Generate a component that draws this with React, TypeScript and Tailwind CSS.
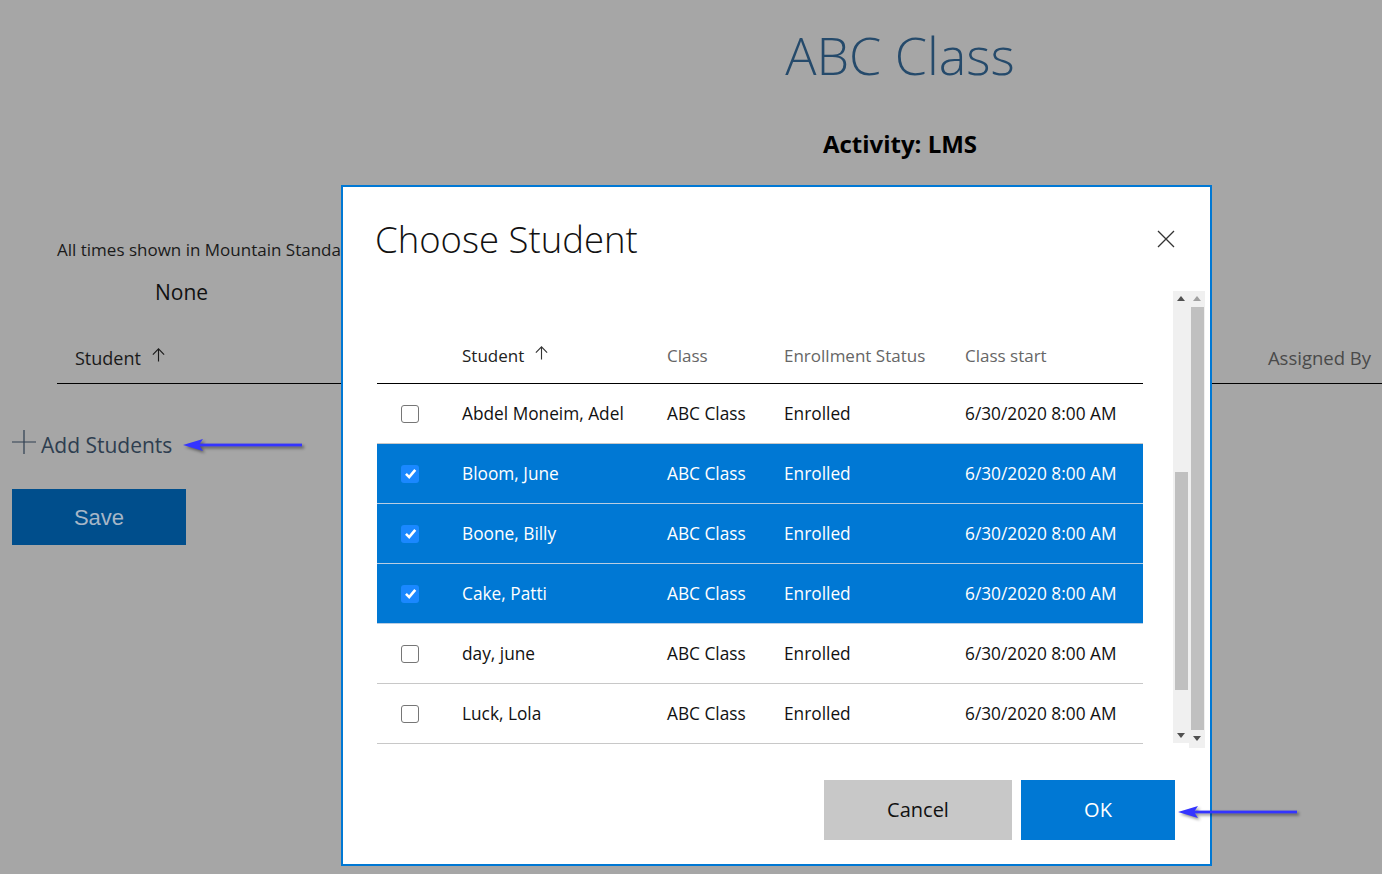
import React from "react";

type Row = { name: string; selected: boolean };

const rows: Row[] = [
  { name: "Abdel Moneim, Adel", selected: false },
  { name: "Bloom, June", selected: true },
  { name: "Boone, Billy", selected: true },
  { name: "Cake, Patti", selected: true },
  { name: "day, june", selected: false },
  { name: "Luck, Lola", selected: false },
];

const UpArrow = ({ className = "" }: { className?: string }) => (
  <svg viewBox="0 0 16 16" className={className} fill="none" stroke="currentColor" strokeWidth={1.2}>
    <path d="M8 15V1.5M2 7.5 8 1.5l6 6" />
  </svg>
);

// blue annotation arrow, tip on the left
const PointerArrow = ({ className = "" }: { className?: string }) => (
  <svg
    viewBox="0 0 122 20"
    className={className}
    style={{ filter: "drop-shadow(2px 2px 1.5px rgba(0,0,0,0.45))" }}
  >
    <polygon points="1,10 21,4 17,10 21,16" fill="#3434ff" />
    <rect x="16" y="8.6" width="104" height="2.8" fill="#3434ff" />
  </svg>
);

const Checkbox = ({ checked }: { checked: boolean }) =>
  checked ? (
    <div className="w-[18px] h-[18px] rounded-[3px] bg-[#1a88ff] flex items-center justify-center">
      <svg viewBox="0 0 12 12" className="w-[13px] h-[13px]" fill="none" stroke="white" strokeWidth={2.4}>
        <path d="M1.8 6.4 4.8 9.4 10.4 2.6" />
      </svg>
    </div>
  ) : (
    <div className="w-[18px] h-[18px] rounded-[3px] bg-white border border-[#767676]" />
  );

const Tri = ({ down = false, color }: { down?: boolean; color: string }) => (
  <svg viewBox="0 0 8 5" className="w-[8px] h-[5px]">
    <polygon points={down ? "0,0 8,0 4,5" : "0,5 8,5 4,0"} fill={color} />
  </svg>
);

export default function App() {
  return (
    <div className="relative w-[1382px] h-[874px] overflow-hidden bg-[#a6a6a6] font-['Open_Sans',sans-serif]">
      {/* page behind the dialog */}
      <div className="flex flex-col">
        <div className="ml-[418px] w-[964px] pt-[25px] text-center">
          <h1 className="text-[52px] leading-[60px] font-light text-[#254a6b]">ABC Class</h1>
          <p className="mt-[44px] text-[24px] leading-[30px] font-bold text-black">Activity: LMS</p>
        </div>

        <p className="mt-[79px] ml-[57px] text-[17px] leading-[24px] text-[#1a1a1a] whitespace-nowrap">
          All times shown in Mountain Standard Time
        </p>
        <p className="mt-[16px] ml-[155px] text-[21px] leading-[28px] text-[#111]">None</p>

        <div className="ml-[57px] h-[78px] border-b border-black flex items-end justify-between pl-[18px] pr-[11px] pb-[13px]">
          <div className="flex items-center gap-[10px] text-[18px] leading-[24px] text-[#1a1a1a]">
            Student
            <UpArrow className="w-[15px] h-[16px] -mt-[6px]" />
          </div>
          <span className="text-[18.5px] leading-[24px] text-[#4a4a4a]">Assigned By</span>
        </div>

        <div className="mt-[47px] ml-[12px] flex items-center">
          <svg viewBox="0 0 24 24" className="w-[24px] h-[24px] -mt-[6px] text-[#2e3e50]" fill="none" stroke="currentColor" strokeWidth={1.2}>
            <path d="M12 0v24M0 12h24" />
          </svg>
          <span className="ml-[5px] text-[21px] leading-[28px] text-[#2e3e50]">Add Students</span>
          <PointerArrow className="ml-[10px] w-[122px] h-[20px]" />
        </div>

        <button className="mt-[30px] ml-[12px] w-[174px] h-[56px] bg-[#004e8c] text-[#a6b6c7] text-[22px] font-['Liberation_Sans',sans-serif]">
          Save
        </button>
      </div>

      {/* dialog */}
      <div className="absolute left-[341px] top-[185px] w-[871px] h-[681px] bg-white border-2 border-[#0078d4] flex flex-col">
        <div className="pt-[28px] pl-[32px] pr-[35px] flex items-center justify-between h-[76px]">
          <h2 className="text-[36.5px] leading-[48px] font-light text-[#111]">Choose Student</h2>
          <svg viewBox="0 0 18 18" className="w-[18px] h-[18px] text-[#333]" fill="none" stroke="currentColor" strokeWidth={1.3}>
            <path d="M1 1l16 16M17 1 1 17" />
          </svg>
        </div>

        <div className="mt-[28px] ml-[34px] h-[457px] flex items-start">
          <div className="w-[766px]">
            <div className="h-[93px] border-b border-black flex items-end pb-[15px] text-[17px] leading-[24px] text-[#666]">
              <div className="w-[85px]" />
              <div className="w-[205px] flex items-center gap-[10px] text-[#222]">
                Student
                <UpArrow className="w-[15px] h-[16px] -mt-[6px] text-[#333]" />
              </div>
              <div className="w-[117px]">Class</div>
              <div className="w-[181px]">Enrollment Status</div>
              <div className="flex-1">Class start</div>
            </div>
            {rows.map((r) => (
              <div
                key={r.name}
                className={
                  r.selected
                    ? "h-[60px] flex items-center border-b border-[#b9cde2] bg-[#0078d4] text-white text-[17.3px]"
                    : "h-[60px] flex items-center border-b border-[#c8c8c8] bg-white text-[#111] text-[17.3px]"
                }
              >
                <div className="w-[85px] pl-[24px]">
                  <Checkbox checked={r.selected} />
                </div>
                <div className="w-[205px]">{r.name}</div>
                <div className="w-[117px]">ABC Class</div>
                <div className="w-[181px]">Enrolled</div>
                <div className="flex-1">6/30/2020 8:00 AM</div>
              </div>
            ))}
          </div>

          {/* inner scrollbar */}
          <div className="ml-[30px] w-[16px] h-[452px] bg-[#f0f0f0] flex flex-col items-center">
            <div className="mt-[5px]"><Tri color="#505050" /></div>
            <div className="mt-[171px] w-[13px] h-[218px] bg-[#c0c0c0]" />
            <div className="mt-[43px]"><Tri down color="#505050" /></div>
          </div>
          {/* outer scrollbar */}
          <div className="w-[16px] h-[457px] bg-[#f0f0f0] flex flex-col items-center">
            <div className="mt-[5px]"><Tri color="#a0a0a0" /></div>
            <div className="mt-[6px] w-[13px] h-[423px] bg-[#c0c0c0]" />
            <div className="mt-[6px]"><Tri down color="#505050" /></div>
          </div>
        </div>

        <div className="mt-[32px] pr-[35px] flex justify-end gap-[9px]">
          <button className="w-[188px] h-[60px] bg-[#c8c8c8] text-[20px] text-[#111]">Cancel</button>
          <button className="w-[154px] h-[60px] bg-[#0078d4] text-[20px] text-white">OK</button>
        </div>
      </div>

      <PointerArrow className="absolute left-[1177px] top-[802px] w-[122px] h-[20px]" />
    </div>
  );
}
